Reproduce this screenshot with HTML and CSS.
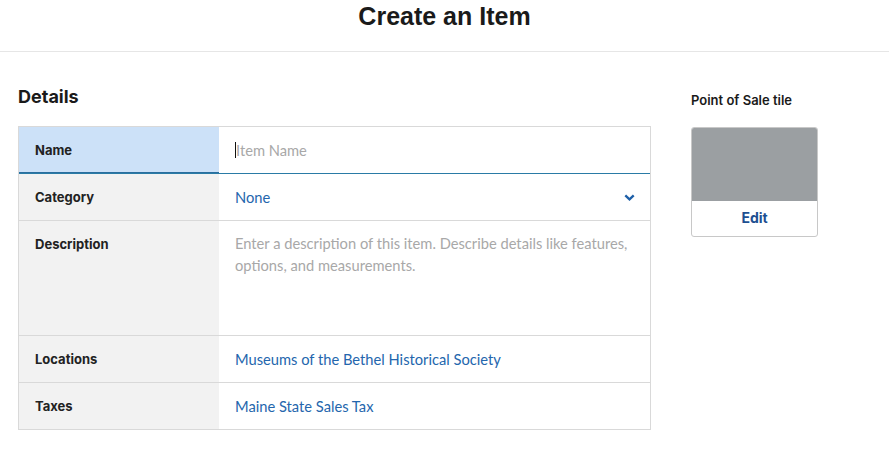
FILE: index.html
```html
<!DOCTYPE html>
<html>
<head>
<meta charset="utf-8">
<link rel="stylesheet" href="styles.css">
</head>
<body>
<header class="top">
  <h1 class="title">Create an Item</h1>
</header>
<main class="content">
  <section class="details">
    <h2 class="section-title">Details</h2>
    <div class="table">
      <div class="row row-active">
        <div class="label">Name</div>
        <div class="value"><span class="caret"></span><span class="placeholder">Item Name</span></div>
      </div>
      <div class="row">
        <div class="label">Category</div>
        <div class="value value-select"><span class="link">None</span>
          <svg class="chev" width="11" height="7" viewBox="0 0 11 7"><path d="M1.3 1.3 L5.5 5.3 L9.7 1.3" fill="none" stroke="#1d5fa8" stroke-width="2.3"/></svg>
        </div>
      </div>
      <div class="row row-tall">
        <div class="label">Description</div>
        <div class="value"><span class="placeholder">Enter a description of this item. Describe details like features, options, and measurements.</span></div>
      </div>
      <div class="row">
        <div class="label">Locations</div>
        <div class="value"><span class="link">Museums of the Bethel Historical Society</span></div>
      </div>
      <div class="row">
        <div class="label">Taxes</div>
        <div class="value"><span class="link">Maine State Sales Tax</span></div>
      </div>
    </div>
  </section>
  <aside class="tile-panel">
    <h3 class="tile-title">Point of Sale tile</h3>
    <div class="tile">
      <div class="tile-img"></div>
      <div class="tile-edit">Edit</div>
    </div>
  </aside>
</main>
</body>
</html>
```
FILE: styles.css
```css
* { box-sizing: border-box; }
body {
  margin: 0;
  font-family: "Inter", "Liberation Sans", sans-serif;
  color: #1e1e1e;
  background: #fff;
}
.top {
  height: 52px;
  border-bottom: 1px solid #e6e6e6;
  display: flex;
  justify-content: center;
}
.title {
  margin: 0;
  padding-top: 1px;
  font-family: "Liberation Sans", sans-serif;
  font-size: 25px;
  font-weight: bold;
  line-height: 30px;
  color: #1a1a1a;
}
.content {
  display: flex;
  align-items: flex-start;
  padding: 0 0 0 18px;
}
.details {
  width: 633px;
}
.section-title {
  margin: 0;
  padding-top: 34px;
  font-size: 18px;
  font-weight: 700;
  line-height: 22px;
  height: 74px;
  color: #1a1a1a;
}
.table {
  border: 1px solid #d9d9d9;
  border-bottom: none;
}
.row {
  display: flex;
  height: 47px;
  border-bottom: 1px solid #d9d9d9;
}
.row-active {
  border-bottom: 1px solid #2a7ba6;
}
.row-active .label { box-shadow: inset 0 -1px 0 #2a6e9e; }
.row-tall { height: 115px; }
.label {
  width: 200px;
  flex: none;
  background: #f2f2f2;
  padding: 15px 16px;
  font-size: 13px;
  font-weight: 700;
  line-height: 17px;
  color: #222;
}
.row-active .label { background: #cce1f8; }
.value {
  flex: 1;
  padding: 12px 16px;
  font-family: "Lato", "Liberation Sans", sans-serif;
  font-size: 14.7px;
  line-height: 22px;
  display: flex;
  align-items: flex-start;
}
.row-tall .value { padding-top: 11px; padding-right: 14px; }
.value-select { justify-content: space-between; }
.chev { margin-top: 8px; margin-right: -1px; }
.caret {
  width: 1px;
  height: 16px;
  background: #111;
  margin-top: 3px;
}
.placeholder { color: #a8a8a8; }
.link { color: #2466ad; }
.tile-panel {
  margin-left: 40px;
}
.tile-title {
  margin: 0;
  padding-top: 40px;
  font-size: 13px;
  font-weight: 600;
  line-height: 16px;
  height: 75px;
  color: #1a1a1a;
}
.tile {
  width: 127px;
  border: 1px solid #c8c8c8;
  border-radius: 3px;
  overflow: hidden;
}
.tile-img {
  height: 73px;
  background: #9b9fa2;
}
.tile-edit {
  height: 35px;
  text-align: center;
  font-size: 14px;
  font-weight: 700;
  line-height: 34px;
  color: #1d4f91;
}
```
